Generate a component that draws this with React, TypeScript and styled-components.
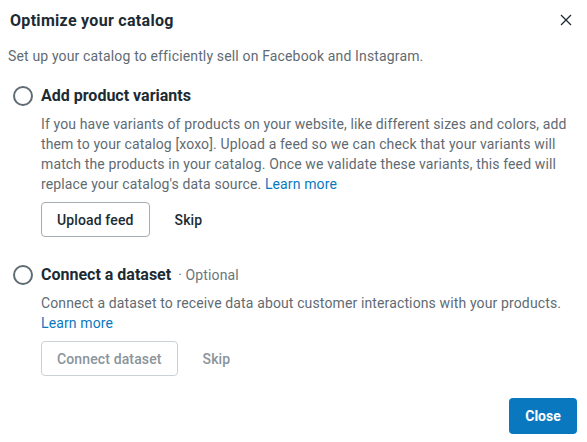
import React from "react";
import styled, { createGlobalStyle } from "styled-components";

const Global = createGlobalStyle`
  html, body { margin: 0; padding: 0; background: #fff; }
  body { font-family: Roboto, "Noto Sans", Arial, sans-serif; -webkit-font-smoothing: antialiased; }
  * { box-sizing: border-box; }
`;

const Dialog = styled.div`
  width: 587px;
  height: 442px;
  padding: 0 10px 8px 8px;
  display: flex;
  flex-direction: column;
  color: #1c2b33;
`;

const Header = styled.div`
  height: 40px;
  display: flex;
  align-items: center;
  justify-content: space-between;
  padding-left: 2px;
`;

const Title = styled.h1`
  margin: 0;
  font-size: 16px;
  font-weight: 700;
  letter-spacing: 0.3px;
  color: #1c2b33;
`;

const CloseIcon = styled.button`
  border: 0;
  background: none;
  padding: 0;
  width: 14px;
  height: 14px;
  margin-right: 4px;
  display: flex;
  align-items: center;
  justify-content: center;
  cursor: pointer;
`;

const Subtitle = styled.p`
  margin: 6px 0 0;
  font-size: 14px;
  line-height: 20px;
  letter-spacing: 0.15px;
  color: #5f6b73;
`;

const Step = styled.section<{ $top: number }>`
  margin-top: ${(p) => p.$top}px;
  display: grid;
  grid-template-columns: 33px 1fr;
`;

const Radio = styled.span`
  width: 20px;
  height: 20px;
  margin-left: 5px;
  border: 2px solid #5f6b73;
  border-radius: 50%;
  align-self: center;
`;

const StepTitle = styled.div`
  display: flex;
  align-items: baseline;
  gap: 7px;
  height: 24px;
  line-height: 24px;
`;

const StepName = styled.span`
  font-size: 16px;
  font-weight: 700;
  color: #1c2b33;
`;

const Optional = styled.span`
  font-size: 14px;
  letter-spacing: 0.13px;
  color: #6b767d;
`;

const Body = styled.div`
  grid-column: 2;
  padding-top: 6px;
`;

const Text = styled.p`
  margin: 0;
  font-size: 14px;
  line-height: 20px;
  letter-spacing: 0.13px;
  color: #5f6b73;
`;

const Link = styled.a`
  color: #0a78be;
  text-decoration: none;
`;

const Actions = styled.div`
  display: flex;
  align-items: center;
  gap: 13px;
  margin-top: 8px;
`;

const OutlineButton = styled.button<{ $disabled?: boolean }>`
  height: 35px;
  padding: 0 15px;
  border: 1px solid ${(p) => (p.$disabled ? "#cbd2d6" : "#a4adb3")};
  border-radius: 4px;
  background: #fff;
  font-family: inherit;
  font-size: 14px;
  font-weight: 500;
  letter-spacing: 0.13px;
  color: ${(p) => (p.$disabled ? "#8a949a" : "#1c2b33")};
`;

const TextButton = styled.button<{ $disabled?: boolean }>`
  height: 35px;
  padding: 0 12px;
  border: 0;
  background: none;
  font-family: inherit;
  font-size: 14px;
  font-weight: 500;
  letter-spacing: 0.13px;
  color: ${(p) => (p.$disabled ? "#8a949a" : "#1c2b33")};
`;

const Footer = styled.div`
  margin-top: auto;
  display: flex;
  justify-content: flex-end;
`;

const PrimaryButton = styled.button`
  height: 36px;
  width: 68px;
  border: 0;
  border-radius: 4px;
  background: #0a78be;
  color: #fff;
  font-family: inherit;
  font-size: 14px;
  font-weight: 700;
`;

export default function App() {
  return (
    <>
      <Global />
      <Dialog>
        <Header>
          <Title>Optimize your catalog</Title>
          <CloseIcon aria-label="Close">
            <svg width="12" height="12" viewBox="0 0 12 12">
              <path d="M1 1L11 11M11 1L1 11" stroke="#1c2b33" strokeWidth="1.3" />
            </svg>
          </CloseIcon>
        </Header>
        <Subtitle>Set up your catalog to efficiently sell on Facebook and Instagram.</Subtitle>
        <Step $top={18}>
          <Radio />
          <StepTitle>
            <StepName>Add product variants</StepName>
          </StepTitle>
          <Body>
            <Text>
              If you have variants of products on your website, like different sizes and colors, add
              them to your catalog [xoxo]. Upload a feed so we can check that your variants will
              match the products in your catalog. Once we validate these variants, this feed will
              replace your catalog's data source. <Link href="#">Learn more</Link>
            </Text>
            <Actions>
              <OutlineButton>Upload feed</OutlineButton>
              <TextButton>Skip</TextButton>
            </Actions>
          </Body>
        </Step>
        <Step $top={26}>
          <Radio />
          <StepTitle>
            <StepName>Connect a dataset</StepName>
            <Optional>· Optional</Optional>
          </StepTitle>
          <Body>
            <Text>
              Connect a dataset to receive data about customer interactions with your products.
              <br />
              <Link href="#">Learn more</Link>
            </Text>
            <Actions>
              <OutlineButton $disabled>Connect dataset</OutlineButton>
              <TextButton $disabled>Skip</TextButton>
            </Actions>
          </Body>
        </Step>
        <Footer>
          <PrimaryButton>Close</PrimaryButton>
        </Footer>
      </Dialog>
    </>
  );
}
